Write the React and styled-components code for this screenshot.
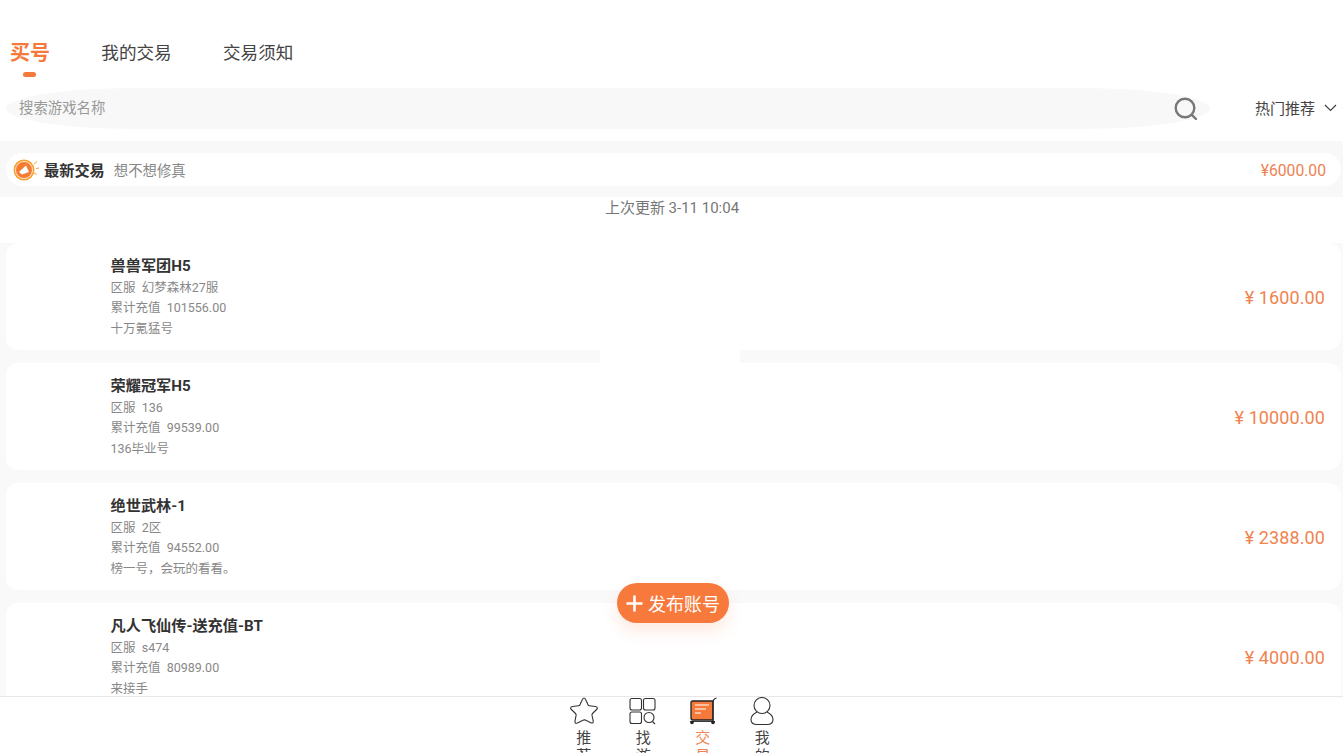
import React from "react";
import styled, { createGlobalStyle } from "styled-components";

const Global = createGlobalStyle`
  html, body { margin: 0; padding: 0; background: #fff; }
  body { font-family: "Roboto", "Noto Sans CJK SC", sans-serif; }
  * { box-sizing: border-box; }
`;
const Page = styled.div`
  position: relative; width: 1343px; height: 753px; overflow: hidden;
  display: flex; flex-direction: column; background: #fff;
`;
const Tabs = styled.div`
  height: 88px; padding: 41px 0 0 10px; display: flex; flex: none; gap: 51.3px;
`;
const Tab = styled.div`
  position: relative; font-size: 17.6px; line-height: 24px; height: 24px;
  color: ${p => (p.$active ? "#f4793b" : "#444")};
  font-weight: ${p => (p.$active ? 700 : 400)};
  ${p => p.$active && `
    font-size: 20px;
    &::after { content: ""; position: absolute; left: 13px; top: 31px; width: 13px; height: 5px; border-radius: 3px; background: #f4793b; }
  `}
`;
const SearchRow = styled.div`
  height: 53px; flex: none; display: flex; align-items: flex-start; padding-left: 6px;
`;
const SearchBar = styled.div`
  width: 1204px; height: 41px; background: #f8f8f8; border-radius: 130px / 20.5px;
  display: flex; align-items: center; justify-content: space-between;
  padding: 0 11px 0 13px;
`;
const Placeholder = styled.span`font-size: 14.4px; color: #999; padding-bottom: 4px;`;
const SortBox = styled.div`
  margin-left: 45px; height: 41px; display: flex; align-items: center; gap: 9px;
  font-size: 15px; color: #444; padding-bottom: 2px;
`;
const NoticeBand = styled.div`
  height: 56px; flex: none; background: #f8f8f8; padding: 12px 2px 11px 6px;
`;
const Notice = styled.div`
  height: 33px; background: #fff; border-radius: 17px; display: flex; align-items: center;
  padding: 0 15px 0 7px;
`;
const NoticeTitle = styled.span`font-size: 15.2px; font-weight: 700; color: #333; margin-left: 5px; padding-bottom: 1px;`;
const NoticeText = styled.span`font-size: 14.4px; color: #888; margin-left: 9px; padding-bottom: 1px;`;
const NoticePrice = styled.span`font-size: 15.7px; color: #ee8252; margin-left: auto; margin-top: 2px;`;
const Updated = styled.div`
  height: 46px; flex: none; padding: 1px 0 0 1px; text-align: center; font-size: 15px; line-height: 20px; color: #777;
`;
const List = styled.div`
  flex: 1; min-height: 0; overflow: hidden; background: #f9f9f9; padding: 0 2px 0 6px;
  display: flex; flex-direction: column; gap: 13px;
`;
const Card = styled.div`
  flex: none; height: 107px; background: #fff; border-radius: 12px; display: flex; align-items: center;
  padding: 0 16px 2px 104.5px;
`;
const Info = styled.div`display: flex; flex-direction: column; align-self: flex-start; padding-top: 13px;`;
const Name = styled.div`font-size: 15.2px; font-weight: 700; color: #333; line-height: 20px; margin-bottom: 2px;`;
const Line = styled.div`font-size: 12.5px; color: #888; line-height: 20.3px; white-space: pre;`;
const Price = styled.div`margin-left: auto; font-size: 18px; color: #f0834f; letter-spacing: 0.1px; padding-top: 4px;`;
const Patch = styled.div`
  position: absolute; left: 600px; top: 350px; width: 140px; height: 50px; background: #fff;
  clip-path: polygon(0 0, 100% 0, 100% 13px, 78% 100%, 22% 100%, 0 13px);
`;
const Fab = styled.div`
  position: absolute; left: 617px; top: 583px; width: 112px; height: 40px; border-radius: 20px;
  background: #f7793c; color: #fff; font-size: 18px; display: flex; align-items: center;
  padding-left: 9px; gap: 5px; box-shadow: 0 8px 16px rgba(247,121,60,.16);
`;
const Nav = styled.div`
  height: 57px; flex: none; background: #fff; border-top: 1px solid #e8e8e8;
  display: flex; justify-content: center; padding-left: 3px; overflow: hidden; position: relative;
`;
const NavItem = styled.div`
  width: 59.5px; display: flex; flex-direction: column; align-items: center;
`;
const NavIcon = styled.div`width: 30px; height: 30px; flex: none;`;
const NavLabel = styled.div`
  width: 16px; font-size: 15px; line-height: 18px; text-align: center; margin-top: 2px;
  color: ${p => (p.$active ? "#f0834f" : "#444")};
`;

const Megaphone = () => (
  <svg width="26" height="24" viewBox="0 0 26 24">
    <circle cx="11" cy="12" r="10.5" fill="#f6a12f" />
    <circle cx="11" cy="12" r="8.5" fill="#f47b2f" stroke="#fff" strokeWidth="0.8" />
    <path d="M6 14 L13 7.5 L16 14 L9 16.5 Z" fill="#fff" />
    <path d="M21 6 L24 3.5 M23 10.5 L26 10 M21 15 L23.5 16.5" stroke="#f6a12f" strokeWidth="1" />
  </svg>
);
const SearchIcon = () => (
  <svg width="26" height="26" viewBox="0 0 26 26" fill="none" stroke="#777" strokeWidth="2.4">
    <circle cx="12" cy="12" r="9.3" />
    <path d="M18.8 18.8 L23 23" strokeLinecap="round" />
  </svg>
);
const Chevron = () => (
  <svg width="13" height="8" viewBox="0 0 13 8" fill="none" stroke="#444" strokeWidth="1.2"><path d="M1 1 L6.5 6.5 L12 1" /></svg>
);
const Plus = () => (
  <svg width="17" height="17" viewBox="0 0 17 17" stroke="#fff" strokeWidth="2.6"><path d="M8.5 0.5 V16.5 M0.5 8.5 H16.5" /></svg>
);
const Star = () => (
  <svg width="30" height="30" viewBox="0 1.5 30 30" fill="none" stroke="#333" strokeWidth="1.1" strokeLinejoin="round">
    <path d="M15 2.5 C16 2.5 16.5 3.5 17 4.8 L19 9.3 C19.3 10 19.8 10.2 20.5 10.3 L26.2 11 C28.5 11.4 29 12.6 27.6 14 L23.5 18 C23 18.5 22.9 19 23 19.7 L24.2 25.5 C24.5 27.5 23.5 28 21.8 27.2 L16.3 24.6 C15.5 24.3 14.8 24.3 14 24.7 L8.4 27.4 C6.6 28.2 5.7 27.5 6 25.6 L7.1 19.7 C7.2 19 7 18.5 6.5 18 L2.4 14 C1 12.6 1.5 11.4 3.6 11 L9.4 10.3 C10.2 10.2 10.7 10 11 9.3 L13 4.8 C13.5 3.5 14 2.5 15 2.5 Z" />
  </svg>
);
const Grid = () => (
  <svg width="30" height="30" viewBox="0 0 30 30" fill="none" stroke="#333" strokeWidth="1.1">
    <rect x="2" y="1.5" width="11.5" height="11.5" rx="2" />
    <rect x="15.5" y="1.5" width="11.5" height="11.5" rx="2" />
    <rect x="2" y="15" width="11.5" height="11.5" rx="2" />
    <circle cx="21" cy="20.5" r="5" />
    <path d="M24.5 24.5 L27 27" />
  </svg>
);
const Cart = () => (
  <svg width="30" height="30" viewBox="0 0 30 30" fill="none">
    <path d="M3 5.5 C3 4.5 3.5 4 4.5 4 H25 V23 H5 C3.8 23 3 22.2 3 21 Z" fill="#f4793b" stroke="#222" strokeWidth="1.3" />
    <path d="M25 24 V6 C25 3 26 1.5 28.5 1" stroke="#222" strokeWidth="1.1" />
    <path d="M7 8 H21 M7 12 H18 M7 16 H13" stroke="#fbd9c4" strokeWidth="1.4" />
    <path d="M2 24.5 H27" stroke="#222" strokeWidth="0.9" />
    <circle cx="4" cy="25.5" r="1.8" fill="#222" />
    <circle cx="25" cy="25.5" r="1.8" fill="#222" />
  </svg>
);
const Person = () => (
  <svg width="30" height="30" viewBox="0 0 30 30" fill="none" stroke="#333" strokeWidth="1.1">
    <ellipse cx="15" cy="8.5" rx="8" ry="8" />
    <path d="M10 15 C6 17 4 19.5 4 22.5 C4 26 7 27.5 10 27.5 H20 C23 27.5 26 26 26 22.5 C26 19.5 24 17 20 15" />
  </svg>
);

const cards = [
  { name: "兽兽军团H5", area: "幻梦森林27服", total: "101556.00", note: "十万氪猛号", price: "1600.00" },
  { name: "荣耀冠军H5", area: "136", total: "99539.00", note: "136毕业号", price: "10000.00" },
  { name: "绝世武林-1", area: "2区", total: "94552.00", note: "榜一号，会玩的看看。", price: "2388.00" },
  { name: "凡人飞仙传-送充值-BT", area: "s474", total: "80989.00", note: "来接手", price: "4000.00" },
];
const navs = [
  { label: "推荐", icon: <Star /> },
  { label: "找游", icon: <Grid /> },
  { label: "交易", icon: <Cart />, active: true },
  { label: "我的", icon: <Person /> },
];

export default function App() {
  return (
    <Page>
      <Global />
      <Tabs>
        <Tab $active>买号</Tab>
        <Tab>我的交易</Tab>
        <Tab>交易须知</Tab>
      </Tabs>
      <SearchRow>
        <SearchBar>
          <Placeholder>搜索游戏名称</Placeholder>
          <SearchIcon />
        </SearchBar>
        <SortBox>热门推荐 <Chevron /></SortBox>
      </SearchRow>
      <NoticeBand>
        <Notice>
          <Megaphone />
          <NoticeTitle>最新交易</NoticeTitle>
          <NoticeText>想不想修真</NoticeText>
          <NoticePrice>¥6000.00</NoticePrice>
        </Notice>
      </NoticeBand>
      <Updated>上次更新 3-11 10:04</Updated>
      <List>
        {cards.map(c => (
          <Card key={c.name}>
            <Info>
              <Name>{c.name}</Name>
              <Line>区服  {c.area}</Line>
              <Line>累计充值  {c.total}</Line>
              <Line>{c.note}</Line>
            </Info>
            <Price>¥ {c.price}</Price>
          </Card>
        ))}
      </List>
      <Patch />
      <Fab><Plus />发布账号</Fab>
      <Nav>
        {navs.map(n => (
          <NavItem key={n.label}>
            <NavIcon>{n.icon}</NavIcon>
            <NavLabel $active={n.active}>{n.label}</NavLabel>
          </NavItem>
        ))}
      </Nav>
    </Page>
  );
}
